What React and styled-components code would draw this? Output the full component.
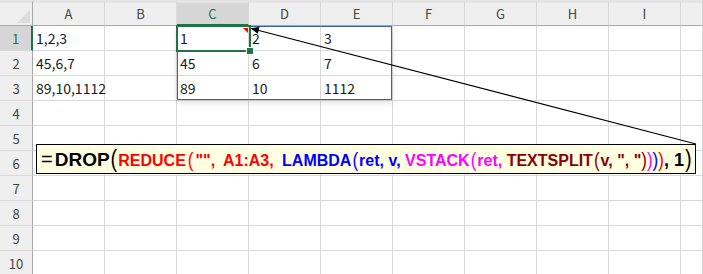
import React from "react";
import styled, { createGlobalStyle } from "styled-components";

const GlobalStyle = createGlobalStyle`
  html, body {
    margin: 0;
    padding: 0;
    background: #ffffff;
    overflow: hidden;
  }
`;

const GREEN = "#217346";

const Sheet = styled.div`
  position: relative;
  display: grid;
  grid-template-columns: 33px repeat(9, 72px) 1fr;
  grid-template-rows: 26px;
  grid-auto-rows: 25px;
  width: 703px;
  height: 274px;
  overflow: hidden;
  font-family: "Noto Sans CJK JP", "Noto Sans", sans-serif;
`;

const Corner = styled.div`
  position: relative;
  box-sizing: border-box;
  background: #efefef;
  border-top: 3px solid #e4e4e4;
  border-right: 1px solid #a9a9a9;
  border-bottom: 1px solid #a9a9a9;

  &::after {
    content: "";
    position: absolute;
    right: 2px;
    bottom: 2px;
    width: 0;
    height: 0;
    border-left: 13px solid transparent;
    border-bottom: 13px solid #dcdcdc;
  }
`;

const ColHead = styled.div`
  box-sizing: border-box;
  display: flex;
  align-items: center;
  justify-content: center;
  background: ${(p) => (p.$active ? "#d6d6d6" : "#efefef")};
  border-top: 3px solid #e4e4e4;
  border-right: 1px solid #d9d9d9;
  border-bottom: ${(p) => (p.$active ? `2px solid ${GREEN}` : "1px solid #a9a9a9")};
  color: ${(p) => (p.$active ? GREEN : "#444444")};
  font-size: 13px;
  padding-bottom: 1px;
`;

const RowHead = styled.div`
  box-sizing: border-box;
  display: flex;
  align-items: center;
  justify-content: center;
  background: ${(p) => (p.$active ? "#d6d6d6" : "#efefef")};
  border-right: ${(p) => (p.$active ? `2px solid ${GREEN}` : "1px solid #a9a9a9")};
  border-bottom: 1px solid #d9d9d9;
  color: ${(p) => (p.$active ? GREEN : "#444444")};
  font-size: 13px;
`;

const Cell = styled.div`
  box-sizing: border-box;
  display: flex;
  align-items: flex-end;
  padding: 0 0 3px 3px;
  border-right: 1px solid #d9d9d9;
  border-bottom: 1px solid #d9d9d9;
  color: #1a1a1a;
  font-size: 14px;
  line-height: 18px;
  white-space: nowrap;
  overflow: visible;
`;

const SpillRange = styled.div`
  position: absolute;
  grid-column: 4 / 7;
  grid-row: 2 / 5;
  inset: 0 1px 1px 0;
  border: 1px solid #3a62b3;
  box-shadow: 0 3px 6px rgba(0, 0, 0, 0.12);
  pointer-events: none;
`;

const Selection = styled.div`
  position: absolute;
  grid-column: 4 / 5;
  grid-row: 2 / 3;
  inset: -1px -2px -1px -1px;
  border: 2px solid ${GREEN};
  pointer-events: none;
`;

const CommentMark = styled.div`
  position: absolute;
  top: 1px;
  right: 1px;
  width: 0;
  height: 0;
  border-left: 5px solid transparent;
  border-top: 5px solid #ff0000;
`;

const FillHandle = styled.div`
  position: absolute;
  right: -5px;
  bottom: -5px;
  width: 6px;
  height: 6px;
  background: ${GREEN};
  border: 1px solid #ffffff;
`;

const Callout = styled.div`
  position: absolute;
  left: 36px;
  top: 144px;
  box-sizing: border-box;
  width: 660px;
  height: 30px;
  display: flex;
  align-items: center;
  padding-left: 4px;
  background: #ffffe1;
  border: 1px solid #000000;
  font-family: "Liberation Sans", Arial, sans-serif;
  white-space: pre;
`;

const Formula = styled.span`
  display: inline;
  line-height: 1;
`;

const Part = styled.span`
  color: ${(p) => p.$color || "#000000"};
  font-size: ${(p) => p.$size || 16}px;
  font-weight: 700;
  word-spacing: ${(p) => p.$spread || 0}px;
`;

const Paren = styled.span`
  display: inline-block;
  color: ${(p) => p.$color || "#000000"};
  font-size: ${(p) => p.$size || 17}px;
  font-weight: 400;
  margin: 0 ${(p) => p.$gap || 0}px;
  transform: scaleY(1.15);
`;

const Equals = styled.span`
  font-size: 20px;
  font-weight: 400;
  margin-right: 2px;
`;

const Arrow = styled.svg`
  position: absolute;
  left: 0;
  top: 0;
  pointer-events: none;
`;

const cols = ["A", "B", "C", "D", "E", "F", "G", "H", "I", ""];

const data = {
  "1-0": "1,2,3",
  "2-0": "45,6,7",
  "3-0": "89,10,1112",
  "1-2": "1",
  "1-3": "2",
  "1-4": "3",
  "2-2": "45",
  "2-3": "6",
  "2-4": "7",
  "3-2": "89",
  "3-3": "10",
  "3-4": "1112",
};

const RED = "#ff0000";
const BLUE = "#0000ff";
const PINK = "#ff00ff";
const DARK = "#8b0000";

const App = () => {
  const rows = [1, 2, 3, 4, 5, 6, 7, 8, 9, 10];

  return (
    <>
      <GlobalStyle />
      <Sheet>
        <Corner />
        {cols.map((c, i) => (
          <ColHead key={c + i} $active={c === "C"}>
            {c}
          </ColHead>
        ))}
        {rows.map((r) => (
          <React.Fragment key={r}>
            <RowHead $active={r === 1}>{r}</RowHead>
            {cols.map((c, i) => (
              <Cell key={c + i}>{data[`${r}-${i}`] || ""}</Cell>
            ))}
          </React.Fragment>
        ))}

        <SpillRange />
        <Selection>
          <CommentMark />
          <FillHandle />
        </Selection>

        <Arrow width="703" height="274" viewBox="0 0 703 274">
          <line x1="257" y1="30" x2="696" y2="144" stroke="#000" strokeWidth="1.2" />
          <polygon points="250.5,28.3 259.6,26.8 257.8,33.8" fill="#000" />
        </Arrow>

        <Callout>
          <Formula>
            <Equals>=</Equals>
            <Part $size={19}>DROP</Part>
            <Paren $size={20} $gap={1}>(</Paren>
            <Part $color={RED}>REDUCE</Part>
            <Paren $color={RED} $gap={2}>(</Paren>
            <Part $color={RED} $spread={4}>"", A1:A3, </Part>
            <Part $color={BLUE}>LAMBDA</Part>
            <Paren $color={BLUE} $gap={1}>(</Paren>
            <Part $color={BLUE}>ret, v, </Part>
            <Part $color={PINK}>VSTACK</Part>
            <Paren $color={PINK} $gap={1}>(</Paren>
            <Part $color={PINK}>ret, </Part>
            <Part $color={DARK}>TEXTSPLIT</Part>
            <Paren $color={DARK} $gap={1}>(</Paren>
            <Part $color={DARK}>v, ", "</Part>
            <Paren $color={DARK}>)</Paren>
            <Paren $color={PINK}>)</Paren>
            <Paren $color={BLUE}>)</Paren>
            <Paren $color={RED}>)</Paren>
            <Part $size={18}>, 1</Part>
            <Paren $size={20} $gap={1}>)</Paren>
          </Formula>
        </Callout>
      </Sheet>
    </>
  );
};

export default App;
